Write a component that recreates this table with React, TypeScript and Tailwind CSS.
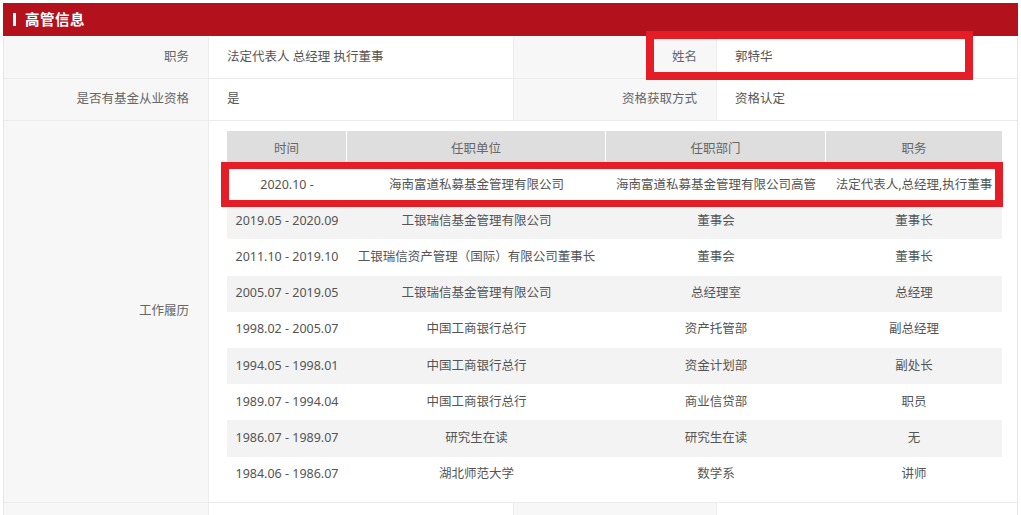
import React from "react";

interface Job {
  time: string;
  unit: string;
  dept: string;
  title: string;
}

const jobs: Job[] = [
  { time: "2020.10 -", unit: "海南富道私募基金管理有限公司", dept: "海南富道私募基金管理有限公司高管", title: "法定代表人,总经理,执行董事" },
  { time: "2019.05 - 2020.09", unit: "工银瑞信基金管理有限公司", dept: "董事会", title: "董事长" },
  { time: "2011.10 - 2019.10", unit: "工银瑞信资产管理（国际）有限公司董事长", dept: "董事会", title: "董事长" },
  { time: "2005.07 - 2019.05", unit: "工银瑞信基金管理有限公司", dept: "总经理室", title: "总经理" },
  { time: "1998.02 - 2005.07", unit: "中国工商银行总行", dept: "资产托管部", title: "副总经理" },
  { time: "1994.05 - 1998.01", unit: "中国工商银行总行", dept: "资金计划部", title: "副处长" },
  { time: "1989.07 - 1994.04", unit: "中国工商银行总行", dept: "商业信贷部", title: "职员" },
  { time: "1986.07 - 1989.07", unit: "研究生在读", dept: "研究生在读", title: "无" },
  { time: "1984.06 - 1986.07", unit: "湖北师范大学", dept: "数学系", title: "讲师" },
];

const Label = ({ children }: { children?: React.ReactNode }) => (
  <div className="h-[42px] bg-[#f7f7f7] border-b border-[#ececec] flex items-center justify-end pr-[19px] text-[#666]">
    {children}
  </div>
);

const Value = ({ children }: { children?: React.ReactNode }) => (
  <div className="h-[42px] bg-white border-b border-l border-[#ececec] flex items-center pl-[18px] text-[#555]">
    {children}
  </div>
);

const App = () => {
  return (
    <div className="relative min-h-screen bg-white pl-[3px] pt-[3px] text-[12.5px] font-['Noto_Sans','Noto_Sans_CJK_SC',sans-serif] overflow-hidden">
      <div className="w-[1015px]">
        {/* Section header */}
        <div className="h-[33px] bg-[#b3121c] flex items-center pl-[10px]">
          <span className="w-[3px] h-[13px] bg-white mr-[9px]" />
          <span className="text-white font-bold text-[14.5px] tracking-[0.5px]">高管信息</span>
        </div>

        <div className="mt-[1px] border-l border-r border-[#e6e6e6] grid grid-cols-[204px_305px_203px_1fr]">
          <Label>职务</Label>
          <Value>法定代表人 总经理 执行董事</Value>
          <div className="h-[42px] bg-[#f7f7f7] border-b border-l border-[#ececec] flex items-center justify-end pr-[19px] text-[#666]">姓名</div>
          <Value>郭特华</Value>

          <Label>是否有基金从业资格</Label>
          <Value>是</Value>
          <div className="h-[42px] bg-[#f7f7f7] border-b border-l border-[#ececec] flex items-center justify-end pr-[19px] text-[#666]">资格获取方式</div>
          <Value>资格认定</Value>

          {/* 工作履历 */}
          <div className="bg-[#f7f7f7] border-b border-[#ececec] flex items-center justify-end pr-[19px] text-[#666]">工作履历</div>
          <div className="col-span-3 bg-white border-b border-l border-[#ececec] pl-[18px] pr-[16px] pt-[10px] pb-[9px]">
            <div className="w-[775px] text-center text-[#555]">
              <div className="grid grid-cols-[120px_259px_220px_176px] h-[36px] bg-[#dedede] text-[#666]">
                <div className="flex items-center justify-center border-r border-white">时间</div>
                <div className="flex items-center justify-center border-r border-white">任职单位</div>
                <div className="flex items-center justify-center border-r border-white">任职部门</div>
                <div className="flex items-center justify-center">职务</div>
              </div>
              {jobs.map((j, i) => (
                <div
                  key={j.time}
                  className={
                    "grid grid-cols-[120px_259px_220px_176px] h-[36.2px] whitespace-nowrap " +
                    (i % 2 === 1 ? "bg-[#f3f3f3]" : "bg-white")
                  }
                >
                  <div className="flex items-center justify-center">{j.time}</div>
                  <div className="flex items-center justify-center">{j.unit}</div>
                  <div className="flex items-center justify-center">{j.dept}</div>
                  <div className="flex items-center justify-center">{j.title}</div>
                </div>
              ))}
            </div>
          </div>

          <Label />
          <Value />
          <div className="h-[42px] bg-[#f7f7f7] border-b border-l border-[#ececec]" />
          <Value />
        </div>
      </div>

      {/* annotation boxes */}
      <div className="absolute left-[646px] top-[31px] w-[327px] h-[49px] border-[8px] border-[#e51d27]" />
      <div className="absolute left-[221px] top-[162px] w-[782px] h-[45px] border-x-[8px] border-y-[7px] border-[#e51d27]" />
    </div>
  );
};

export default App;
